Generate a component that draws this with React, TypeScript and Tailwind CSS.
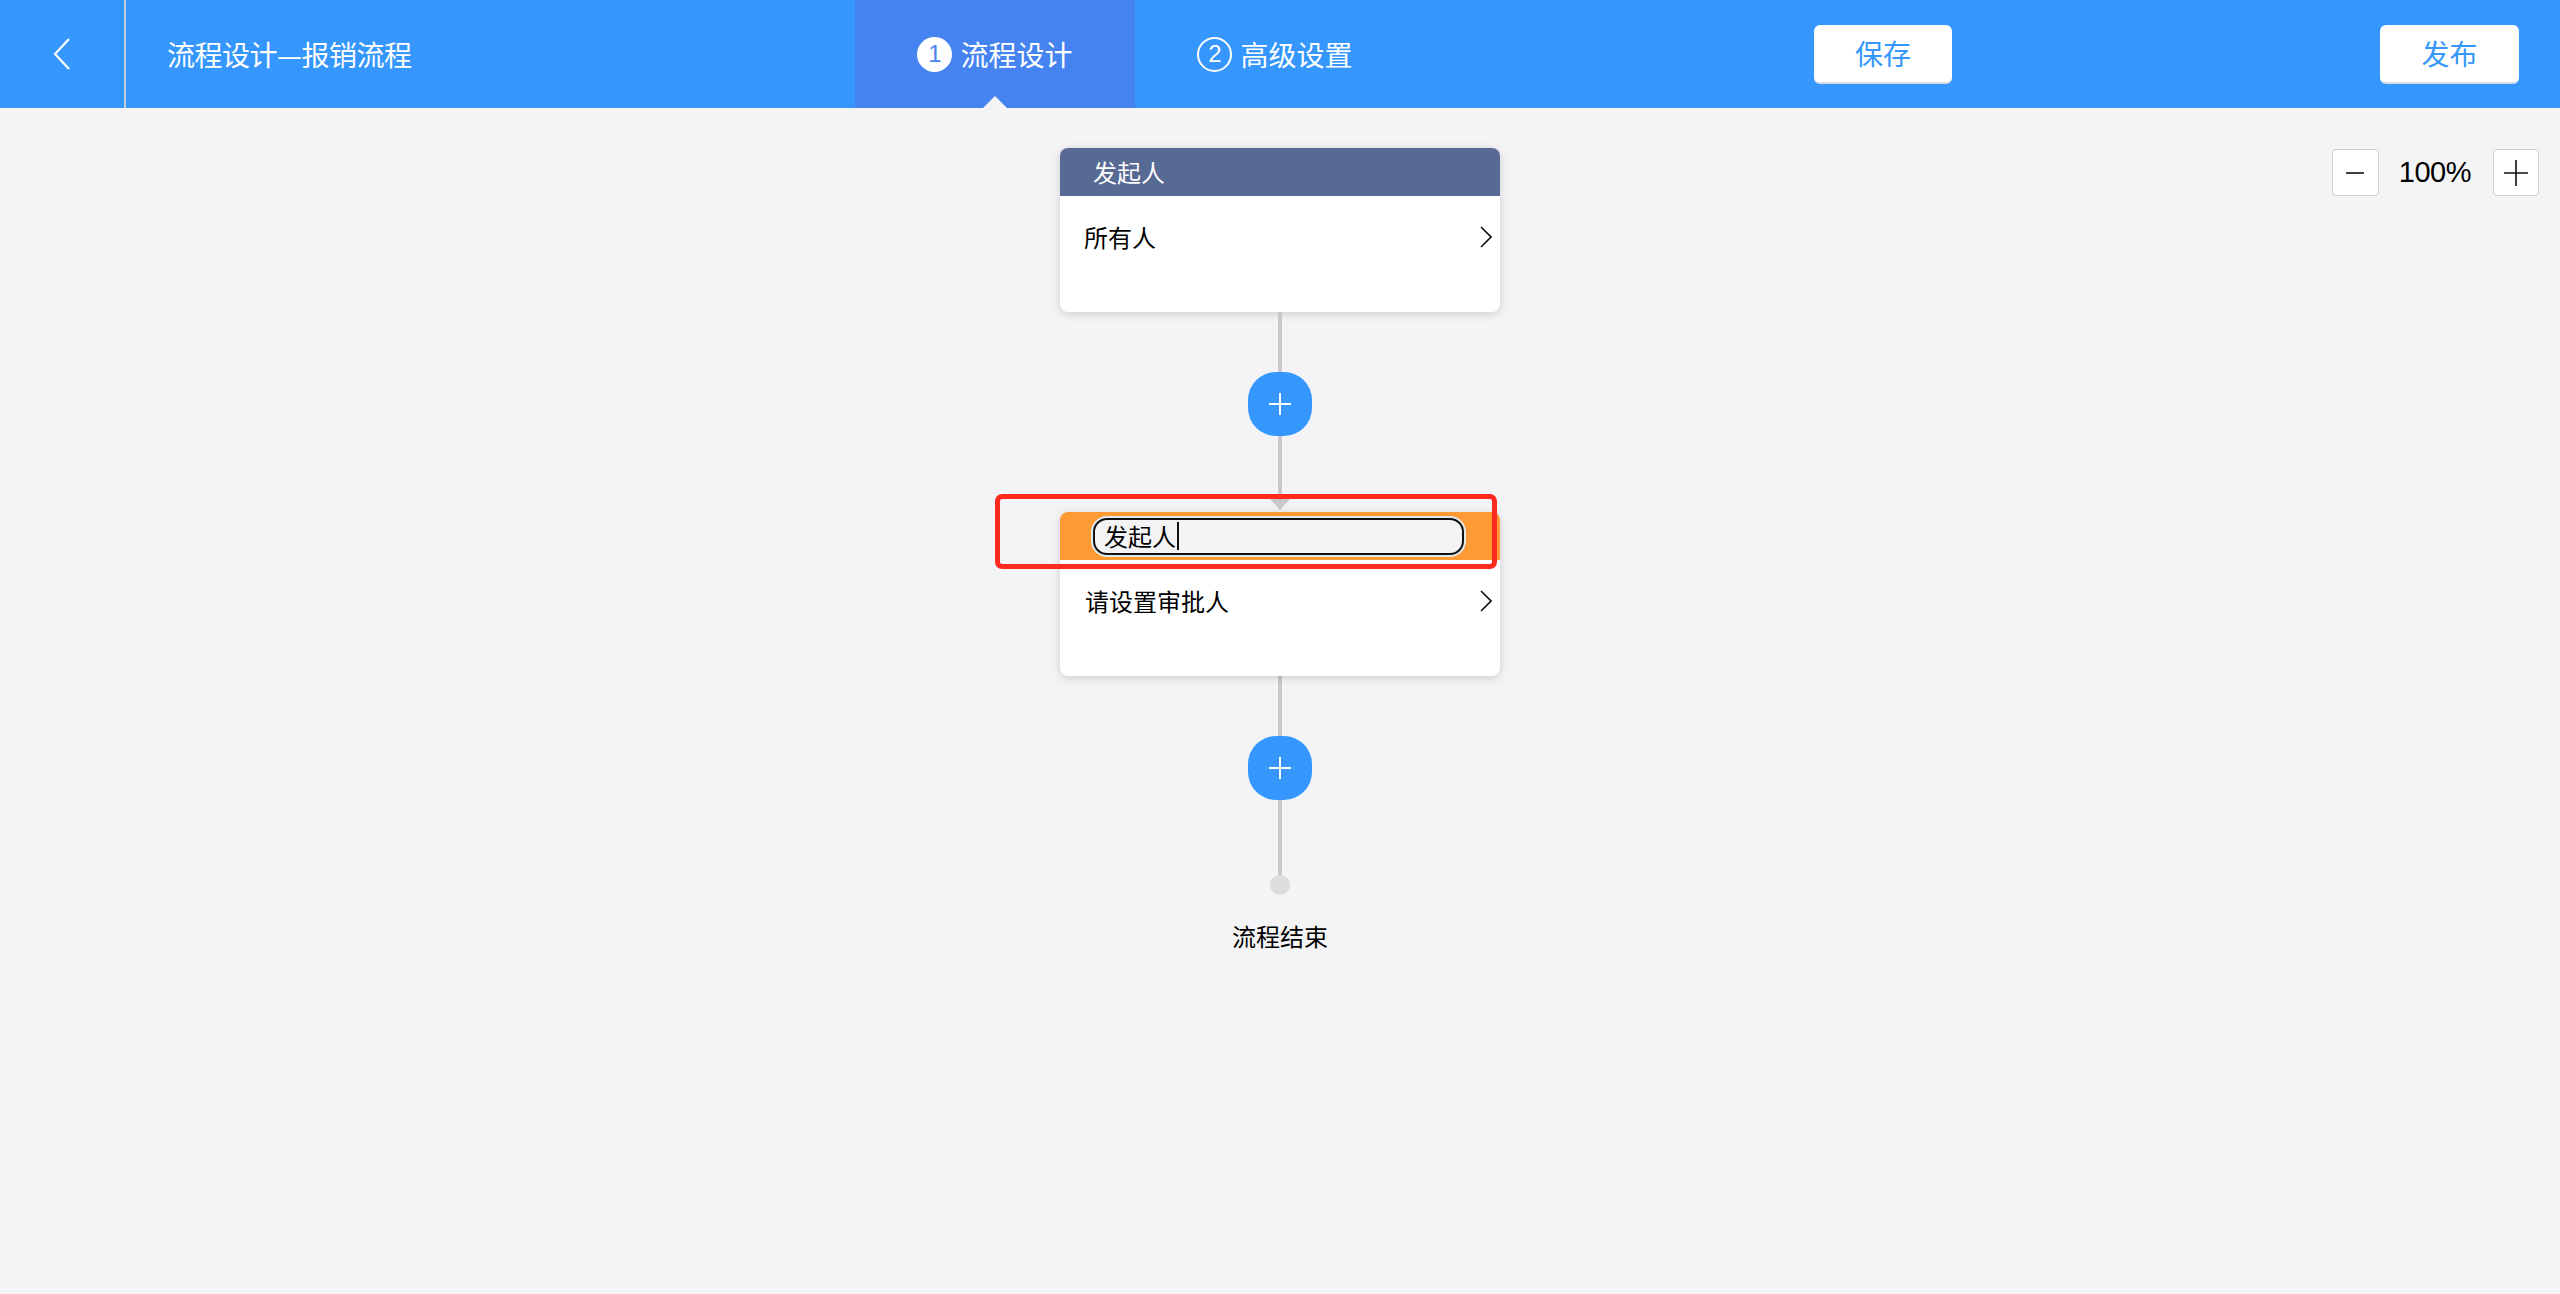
import React from "react";

const Chevron = () => (
  <svg width="12" height="22" viewBox="0 0 12 22" fill="none">
    <polyline points="1,1 11,11 1,21" stroke="#111" strokeWidth="1.6" />
  </svg>
);

const PlusButton = () => (
  <button className="w-[64px] h-[64px] rounded-[28px] bg-[#3597fd] flex items-center justify-center shrink-0">
    <svg width="24" height="24" viewBox="0 0 24 24">
      <path d="M12 1v22M1 12h22" stroke="#fff" strokeWidth="2" />
    </svg>
  </button>
);

const Line = ({ h }: { h: string }) => <div className={`w-[4px] bg-[#c9c9cb] ${h}`} />;

export default function App() {
  return (
    <div className="min-h-screen w-full bg-[#f4f4f6] font-['Noto_Sans_CJK_SC','Noto_Sans',sans-serif] text-black">
      {/* top bar */}
      <header className="h-[108px] bg-[#3597fd] flex items-stretch text-white">
        <div className="w-[855px] flex items-stretch shrink-0">
          <button className="w-[124px] flex items-center justify-center">
            <svg width="18" height="34" viewBox="0 0 18 34" fill="none">
              <polyline points="16,2 2,17 16,32" stroke="#fff" strokeWidth="2.2" />
            </svg>
          </button>
          <div className="w-[2px] bg-[#c4cbd4]" />
          <div className="pl-[41px] flex items-center text-[28px] leading-none tracking-[-0.5px]">
            流程设计—报销流程
          </div>
        </div>

        <div className="relative w-[280px] bg-[#4584f0] flex items-center justify-center gap-[8px]">
          <span className="w-[35px] h-[35px] rounded-full bg-white text-[#4584f0] flex items-center justify-center text-[24px] leading-none font-['Liberation_Sans',sans-serif]">
            1
          </span>
          <span className="text-[28px] leading-none">流程设计</span>
          <span className="absolute bottom-0 left-1/2 -translate-x-1/2 w-0 h-0 border-l-[12px] border-r-[12px] border-b-[12px] border-l-transparent border-r-transparent border-b-[#f4f4f6]" />
        </div>
        <div className="w-[280px] flex items-center justify-center gap-[8px]">
          <span className="w-[35px] h-[35px] rounded-full border-2 border-white flex items-center justify-center text-[24px] leading-none font-['Liberation_Sans',sans-serif]">
            2
          </span>
          <span className="text-[28px] leading-none">高级设置</span>
        </div>

        <div className="flex items-center ml-[399px]">
          <button className="w-[138px] h-[59px] bg-white rounded-[6px] border-b-2 border-[#d9dde3] text-[#3597fd] text-[28px] leading-none">
            保存
          </button>
        </div>
        <div className="flex items-center ml-auto pr-[41px]">
          <button className="w-[139px] h-[59px] bg-white rounded-[6px] border-b-2 border-[#d9dde3] text-[#3597fd] text-[28px] leading-none">
            发布
          </button>
        </div>
      </header>

      {/* canvas */}
      <main className="relative flex flex-col items-center pt-[40px] pb-[40px]">
        <div className="absolute top-[41px] right-[21px] flex items-center">
          <button className="w-[47px] h-[47px] bg-white border border-[#cfcfd1] rounded-[4px] flex items-center justify-center">
            <svg width="20" height="20" viewBox="0 0 20 20">
              <path d="M1 10h18" stroke="#111" strokeWidth="1.6" />
            </svg>
          </button>
          <span className="ml-[20px] mr-[22px] text-[29px] leading-none font-['Liberation_Sans',sans-serif] tracking-[-0.5px]">100%</span>
          <button className="w-[46px] h-[47px] bg-white border border-[#cfcfd1] rounded-[4px] flex items-center justify-center">
            <svg width="24" height="26" viewBox="0 0 24 26">
              <path d="M12 0v26M0 13h24" stroke="#111" strokeWidth="1.6" />
            </svg>
          </button>
        </div>

        {/* start node */}
        <div className="w-[440px] h-[164px] bg-white rounded-[8px] shadow-[0_2px_10px_rgba(0,0,0,0.16)] overflow-hidden flex flex-col">
          <div className="h-[48px] bg-[#566a94] flex items-center pl-[33px] text-white text-[24px] leading-none">
            发起人
          </div>
          <div className="flex items-start justify-between pl-[24px] pr-[8px] pt-[28px]">
            <span className="text-[24px] leading-[26px]">所有人</span>
            <span className="mt-[2px]">
              <Chevron />
            </span>
          </div>
        </div>

        <Line h="h-[60px]" />
        <PlusButton />
        <Line h="h-[62px]" />
        <span className="w-0 h-0 border-l-[11px] border-r-[11px] border-t-[12px] border-l-transparent border-r-transparent border-t-[#c9c9cb]" />
        <div className="h-[2px]" />

        {/* approver node */}
        <div className="relative w-[440px]">
          <div className="h-[164px] bg-white rounded-[8px] shadow-[0_2px_10px_rgba(0,0,0,0.16)] overflow-hidden flex flex-col">
            <div className="h-[48px] bg-[#fe9a33] flex items-center pl-[33px]">
              <div className="w-[371px] h-[37px] rounded-[14px] border-2 border-[#111] bg-[#f3f3f5] ring-2 ring-[#dfe8ea] flex items-center pl-[9px] text-[24px] leading-none">
                发起人
                <span className="w-[2px] h-[28px] bg-[#111] ml-[1px]" />
              </div>
            </div>
            <div className="flex items-start justify-between pl-[25px] pr-[8px] pt-[28px]">
              <span className="text-[24px] leading-[26px]">请设置审批人</span>
              <span className="mt-[2px]">
                <Chevron />
              </span>
            </div>
          </div>
          <div className="absolute left-[-65px] top-[-18px] w-[502px] h-[75px] border-[5px] border-[#ff2a1f] rounded-[7px] pointer-events-none" />
        </div>

        <Line h="h-[60px]" />
        <PlusButton />
        <Line h="h-[76px]" />
        <span className="w-[20px] h-[20px] rounded-full bg-[#dcdddf] -mt-[1px]" />
        <span className="mt-[29px] text-[24px] leading-none">流程结束</span>
      </main>
    </div>
  );
}
